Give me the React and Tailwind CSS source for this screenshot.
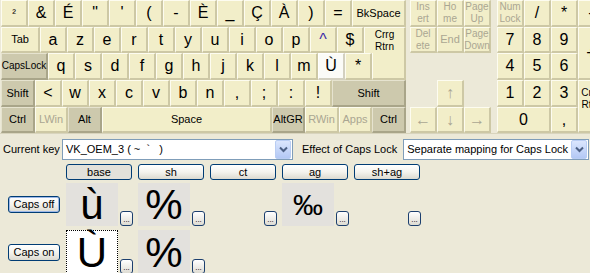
import React from 'react';

const ROWS = [27, 26, 27, 27, 26];

const keyTone = {
    norm: 'bg-[#f2eec9] border-t-[#fdfcf0] border-l-[#fdfcf0] border-b-[#cdc8a5] border-r-[#cdc8a5] text-black',
    mod: 'bg-[#cdc9ad] border-t-[#e6e3cf] border-l-[#e6e3cf] border-b-[#a9a589] border-r-[#a9a589] text-black',
    off: 'bg-[#f2eec9] border-t-[#fdfcf0] border-l-[#fdfcf0] border-b-[#cdc8a5] border-r-[#cdc8a5] text-[#aaa692]',
    cur: 'bg-[#fbfbf7] border-t-[#ffffff] border-l-[#ffffff] border-b-[#d3d0c0] border-r-[#d3d0c0] text-black',
    dead: 'bg-[#f2eec9] border-t-[#fdfcf0] border-l-[#fdfcf0] border-b-[#cdc8a5] border-r-[#cdc8a5] text-[#3a2aa8]',
};

const Key = ({ w, label, tone = 'norm', size = 'big', className = '' }) => {
    const text = size === 'big' ? 'text-[16px]' : size === 'mid' ? 'text-[11px]' : 'text-[10px] leading-[12px]';
    return (
        <div
            className={`shrink-0 h-full flex items-center justify-center border-t border-l border-b-2 border-r-2 ${keyTone[tone]} ${text} ${className}`}
            style={w ? { width: w } : undefined}
        >
            {label}
        </div>
    );
};

const Row = ({ h, keys }) => (
    <div className="flex" style={{ height: h }}>
        {keys.map((k, i) => (
            <Key key={i} {...k} />
        ))}
    </div>
);

const singles = (chars, tone) => chars.map((c) => ({ w: 27, label: c, tone }));

const MainBlock = () => (
    <div className="flex flex-col w-[405px] ml-px">
        <Row
            h={ROWS[0]}
            keys={[
                { w: 27, label: '²', size: 'mid' },
                ...singles(['&', 'É', '"', "'", '(', '-', 'È', '_', 'Ç', 'À', ')', '=']),
                { w: 54, label: 'BkSpace', size: 'mid' },
            ]}
        />
        <Row
            h={ROWS[1]}
            keys={[
                { w: 39, label: 'Tab', size: 'mid' },
                ...singles(['a', 'z', 'e', 'r', 't', 'y', 'u', 'i', 'o', 'p']),
                { w: 27, label: '^', tone: 'dead' },
                { w: 27, label: '$' },
                {
                    w: 42,
                    size: 'small',
                    className: '!border-b-0 flex-col',
                    label: (
                        <>
                            <span>Crrg</span>
                            <span>Rtrn</span>
                        </>
                    ),
                },
            ]}
        />
        <Row
            h={ROWS[2]}
            keys={[
                { w: 47, label: 'CapsLock', tone: 'mod', size: 'small' },
                ...singles(['q', 's', 'd', 'f', 'g', 'h', 'j', 'k', 'l', 'm']),
                { w: 27, label: 'Ù', tone: 'cur' },
                { w: 27, label: '*' },
                { w: 34, label: '', className: '!border-t-0' },
            ]}
        />
        <Row
            h={ROWS[3]}
            keys={[
                { w: 34, label: 'Shift', tone: 'mod', size: 'mid' },
                ...singles(['<', 'w', 'x', 'c', 'v', 'b', 'n', ',', ';', ':', '!']),
                { w: 74, label: 'Shift', tone: 'mod', size: 'mid' },
            ]}
        />
        <Row
            h={ROWS[4]}
            keys={[
                { w: 34, label: 'Ctrl', tone: 'mod', size: 'mid' },
                { w: 33, label: 'LWin', tone: 'off', size: 'mid' },
                { w: 34, label: 'Alt', tone: 'mod', size: 'mid' },
                { w: 170, label: 'Space', size: 'mid' },
                { w: 33, label: 'AltGR', tone: 'mod', size: 'mid' },
                { w: 34, label: 'RWin', tone: 'off', size: 'mid' },
                { w: 33, label: 'Apps', tone: 'off', size: 'mid' },
                { w: 34, label: 'Ctrl', tone: 'mod', size: 'mid' },
            ]}
        />
    </div>
);

const two = (a, b) => (
    <span className="flex flex-col items-center leading-[12px]">
        <span>{a}</span>
        <span>{b}</span>
    </span>
);

const NavBlock = () => (
    <div className="grid grid-cols-[27px_27px_27px] grid-rows-[27px_26px_27px_27px_26px] ml-[4px] shrink-0">
        <Key tone="off" size="small" label={two('Ins', 'ert')} />
        <Key tone="off" size="small" label={two('Ho', 'me')} />
        <Key tone="off" size="small" label={two('Page', 'Up')} />
        <Key tone="off" size="small" label={two('Del', 'ete')} />
        <Key tone="off" size="mid" label="End" />
        <Key tone="off" size="small" label={two('Page', 'Down')} />
        <div className="col-span-3" />
        <div />
        <Key tone="off" label="↑" />
        <div />
        <Key tone="off" label="←" />
        <Key tone="off" label="↓" />
        <Key tone="off" label="→" />
    </div>
);

const NumPad = () => (
    <div className="grid grid-cols-[27px_27px_27px_27px] grid-rows-[27px_26px_27px_27px_26px] ml-[6px] shrink-0">
        <Key tone="off" size="small" label={two('Num', 'Lock')} />
        <Key label="/" />
        <Key label="*" />
        <Key label="-" />
        <Key label="7" />
        <Key label="8" />
        <Key label="9" />
        <Key label="+" className="row-span-2" />
        <Key label="4" />
        <Key label="5" />
        <Key label="6" />
        <Key label="1" />
        <Key label="2" />
        <Key label="3" />
        <Key size="small" label={two('Crrg', 'Rtrn')} className="row-span-2 !items-start pt-[6px]" />
        <Key label="0" className="col-span-2" />
        <Key label="," />
    </div>
);

const Combo = ({ text, className = '' }) => (
    <div className={`h-[21px] bg-white border border-[#7f9db9] flex items-center ${className}`}>
        <span className="flex-1 pl-[3px] text-[11px] whitespace-pre text-black">{text}</span>
        <div className="w-[16px] h-[19px] mr-px rounded-[2px] border border-[#b9cdf3] bg-gradient-to-b from-[#dbe6fd] to-[#b3c8f5] flex items-center justify-center">
            <svg width="9" height="7" viewBox="0 0 9 7">
                <path d="M1 1.5 L4.5 5 L8 1.5" fill="none" stroke="#4d6185" strokeWidth="2" />
            </svg>
        </div>
    </div>
);

const XpButton = ({ label, w, pressed, className = '' }) => (
    <div
        className={`h-[16px] rounded-[3px] border border-[#003c74] flex items-center justify-center text-[11px] leading-none text-black ${
            pressed ? 'bg-[#e2e1da]' : 'bg-gradient-to-b from-[#ffffff] via-[#f4f3ee] to-[#dcdad0]'
        } ${className}`}
        style={{ width: w }}
    >
        {label}
    </div>
);

const Dots = () => (
    <div className="w-[13px] h-[15px] rounded-[3px] border border-[#1c3f6e] bg-gradient-to-b from-[#ffffff] to-[#dedcd3] flex items-end justify-center pb-[1px] text-[8px] leading-none text-black">
        ...
    </div>
);

const Cell = ({ ch, filled, focused, small }) => (
    <div className="flex items-end w-[72px] shrink-0">
        <div
            className={`w-[52px] h-full flex items-center justify-center text-black ${
                focused ? 'bg-white border border-dotted border-black' : filled ? 'bg-[#e3e1dd]' : ''
            } ${small ? 'text-[30px]' : 'text-[42px]'}`}
        >
            {ch}
        </div>
        <div className="ml-[2px]">
            <Dots />
        </div>
    </div>
);

export default function App() {
    const font = { fontFamily: '"Liberation Sans", Arial, sans-serif' };
    return (
        <div className="w-[590px] h-[273px] overflow-hidden bg-[#ece9d8] select-none" style={font}>
            <div className="flex h-[134px] border-b border-[#d8d4bd] w-[620px]">
                <MainBlock />
                <NavBlock />
                <NumPad />
            </div>

            <div className="flex items-center h-[22px] mt-[4px]">
                <span className="w-[62px] pl-[3px] text-[11px] text-black">Current key</span>
                <Combo text="VK_OEM_3 ( ~  `   )" className="w-[231px]" />
                <span className="ml-[9px] text-[11px] text-black">Effect of Caps Lock</span>
                <Combo text="Separate mapping for Caps Lock" className="ml-[6px] w-[186px]" />
            </div>

            <div className="flex gap-[6px] pl-[66px] mt-[4px]">
                <XpButton label="base" w={66} pressed />
                <XpButton label="sh" w={66} />
                <XpButton label="ct" w={66} />
                <XpButton label="ag" w={66} />
                <XpButton label="sh+ag" w={66} />
            </div>

            <div className="flex h-[43px] mt-[3px]">
                <div className="w-[66px] flex items-center pl-[8px]">
                    <XpButton label="Caps off" w={52} className="h-[17px] shadow-[inset_0_0_0_1px_#9db8e8]" />
                </div>
                <Cell ch="ù" filled />
                <Cell ch="%" filled />
                <Cell ch="" />
                <Cell ch="‰" filled small />
                <Cell ch="" />
            </div>

            <div className="flex h-[44px] mt-[4px]">
                <div className="w-[66px] flex items-center pl-[8px]">
                    <XpButton label="Caps on" w={52} className="h-[17px]" />
                </div>
                <Cell ch="Ù" focused />
                <Cell ch="%" filled />
            </div>
        </div>
    );
}
